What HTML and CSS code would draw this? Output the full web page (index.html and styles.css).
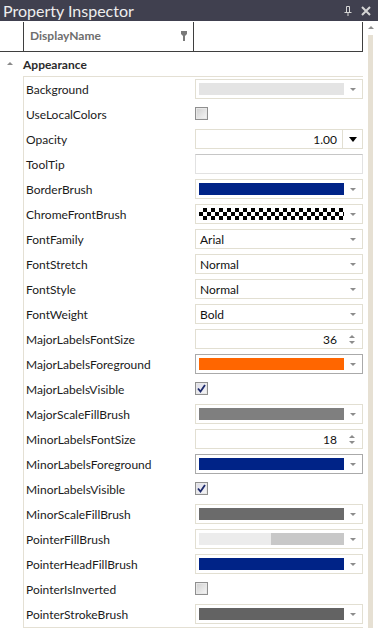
FILE: index.html
```html
<!DOCTYPE html>
<html lang="en">
<head>
    <meta charset="UTF-8">
    <title>Property Inspector</title>
    <link rel="stylesheet" href="styles.css">
</head>
<body>
    <div class="panel">
        <div class="titlebar">
            <span class="title">Property Inspector</span>
            <svg class="pin" width="8" height="10" viewBox="0 0 8 10">
                <path d="M2.5 0.5 V6 M5.5 0.5 V6 M2.5 0.5 H5.5 M0.5 6.5 H7.5 M4 6.5 V10" stroke="#d4d4d4" stroke-width="1" fill="none"/>
            </svg>
            <svg class="close" width="10" height="10" viewBox="0 0 10 10">
                <path d="M1 1 L9 9 M9 1 L1 9" stroke="#d4d4d4" stroke-width="2"/>
            </svg>
        </div>
        <div class="main">
            <div class="grid">
                <div class="header">
                    <div class="hcell first"></div>
                    <div class="hcell name-head">
                        <span>DisplayName</span>
                        <svg width="6" height="10" viewBox="0 0 6 10">
                            <path d="M0 0 H6 V3 L4 5 V10 H2 V5 L0 3 Z" fill="#7a7a7a"/>
                        </svg>
                    </div>
                    <div class="hcell last"></div>
                </div>
                <div class="group">
                    <span class="collapse"></span>
                    <span>Appearance</span>
                </div>
                <div class="rows">
                    <div class="row">
                        <div class="name">Background</div>
                        <div class="value"><div class="combo"><span class="swatch" style="background:#e4e4e4"></span><span class="arrow"></span></div></div>
                    </div>
                    <div class="row">
                        <div class="name">UseLocalColors</div>
                        <div class="value"><span class="check"></span></div>
                    </div>
                    <div class="row">
                        <div class="name">Opacity</div>
                        <div class="value"><div class="numdrop"><span class="num">1.00</span><span class="drop"></span></div></div>
                    </div>
                    <div class="row">
                        <div class="name">ToolTip</div>
                        <div class="value"><div class="textbox"></div></div>
                    </div>
                    <div class="row">
                        <div class="name">BorderBrush</div>
                        <div class="value"><div class="combo"><span class="swatch" style="background:#002387"></span><span class="arrow"></span></div></div>
                    </div>
                    <div class="row">
                        <div class="name">ChromeFrontBrush</div>
                        <div class="value"><div class="combo"><span class="swatch checker"></span><span class="arrow"></span></div></div>
                    </div>
                    <div class="row">
                        <div class="name">FontFamily</div>
                        <div class="value"><div class="combo"><span class="text">Arial</span><span class="arrow"></span></div></div>
                    </div>
                    <div class="row">
                        <div class="name">FontStretch</div>
                        <div class="value"><div class="combo"><span class="text">Normal</span><span class="arrow"></span></div></div>
                    </div>
                    <div class="row">
                        <div class="name">FontStyle</div>
                        <div class="value"><div class="combo"><span class="text">Normal</span><span class="arrow"></span></div></div>
                    </div>
                    <div class="row">
                        <div class="name">FontWeight</div>
                        <div class="value"><div class="combo"><span class="text">Bold</span><span class="arrow"></span></div></div>
                    </div>
                    <div class="row">
                        <div class="name">MajorLabelsFontSize</div>
                        <div class="value"><div class="spin"><span class="num">36</span><span class="updown"><i class="up"></i><i class="down"></i></span></div></div>
                    </div>
                    <div class="row">
                        <div class="name">MajorLabelsForeground</div>
                        <div class="value"><div class="combo active"><span class="swatch" style="background:#ff6600"></span><span class="arrow"></span></div></div>
                    </div>
                    <div class="row">
                        <div class="name">MajorLabelsVisible</div>
                        <div class="value"><span class="check checked"><svg width="9" height="9" viewBox="0 0 9 9"><path d="M1 4.5 L3.5 7.5 L8 1" stroke="#1d2a6b" stroke-width="1.8" fill="none"/></svg></span></div>
                    </div>
                    <div class="row">
                        <div class="name">MajorScaleFillBrush</div>
                        <div class="value"><div class="combo"><span class="swatch" style="background:#7f7f7f"></span><span class="arrow"></span></div></div>
                    </div>
                    <div class="row">
                        <div class="name">MinorLabelsFontSize</div>
                        <div class="value"><div class="spin"><span class="num">18</span><span class="updown"><i class="up"></i><i class="down"></i></span></div></div>
                    </div>
                    <div class="row">
                        <div class="name">MinorLabelsForeground</div>
                        <div class="value"><div class="combo active"><span class="swatch" style="background:#002387"></span><span class="arrow"></span></div></div>
                    </div>
                    <div class="row">
                        <div class="name">MinorLabelsVisible</div>
                        <div class="value"><span class="check checked"><svg width="9" height="9" viewBox="0 0 9 9"><path d="M1 4.5 L3.5 7.5 L8 1" stroke="#1d2a6b" stroke-width="1.8" fill="none"/></svg></span></div>
                    </div>
                    <div class="row">
                        <div class="name">MinorScaleFillBrush</div>
                        <div class="value"><div class="combo"><span class="swatch" style="background:#6b6b6b"></span><span class="arrow"></span></div></div>
                    </div>
                    <div class="row">
                        <div class="name">PointerFillBrush</div>
                        <div class="value"><div class="combo"><span class="swatch split"></span><span class="arrow"></span></div></div>
                    </div>
                    <div class="row">
                        <div class="name">PointerHeadFillBrush</div>
                        <div class="value"><div class="combo"><span class="swatch" style="background:#002387"></span><span class="arrow"></span></div></div>
                    </div>
                    <div class="row">
                        <div class="name">PointerIsInverted</div>
                        <div class="value"><span class="check"></span></div>
                    </div>
                    <div class="row">
                        <div class="name">PointerStrokeBrush</div>
                        <div class="value"><div class="combo"><span class="swatch" style="background:#636363"></span><span class="arrow"></span></div></div>
                    </div>
                </div>
            </div>
            <div class="scroll">
                <span class="scroll-up"></span>
                <span class="thumb"></span>
            </div>
        </div>
    </div>
</body>
</html>
```

FILE: styles.css
```css
* {
    box-sizing: border-box;
}
body {
    margin: 0;
    font-family: Lato, "Liberation Sans", sans-serif;
    font-size: 12px;
    color: #1b1b1b;
    background: #fff;
}
.panel {
    width: 378px;
    height: 628px;
    overflow: hidden;
    display: flex;
    flex-direction: column;
}
.titlebar {
    height: 21px;
    flex: none;
    background: #40404f;
    color: #eeeeee;
    display: flex;
    align-items: center;
    padding: 0 7px 0 3px;
    font-size: 16px;
}
.title {
    flex: 1;
}
.pin {
    margin-right: 9px;
    margin-top: 1px;
}
.main {
    flex: 1;
    display: flex;
    min-height: 0;
}
.grid {
    width: 363px;
    flex: none;
}
.header {
    display: flex;
    height: 31px;
    padding-top: 1px;
    border-bottom: 1px solid #3f3f3f;
}
.hcell {
    border-right: 1px solid #3f3f3f;
}
.hcell.first {
    width: 24px;
}
.hcell.name-head {
    width: 170px;
    display: flex;
    align-items: center;
    justify-content: space-between;
    padding: 0 6px 2px 6px;
    font-weight: bold;
    color: #6e6e6e;
}
.hcell.last {
    width: 169px;
}
.group {
    height: 24px;
    display: flex;
    align-items: center;
    font-weight: bold;
    color: #2b2b2b;
}
.collapse {
    width: 0;
    height: 0;
    margin: 0 10px 1px 7px;
    border-left: 3px solid transparent;
    border-right: 3px solid transparent;
    border-bottom: 3px solid #8a8a8a;
}
.rows {
    margin-left: 23px;
    border-left: 1px solid #e4e0d4;
    border-top: 1px solid #e4e0d4;
    border-bottom: 1px solid #e4e0d4;
}
.row {
    display: flex;
    height: 25px;
}
.name {
    width: 169px;
    padding: 5px 0 0 2px;
}
.value {
    width: 170px;
    padding: 2px 0 0 2px;
}
.combo,
.numdrop,
.spin,
.textbox {
    height: 20px;
    border: 1px solid #e2dfd2;
    background: #fff;
    display: flex;
    align-items: center;
}
.combo.active {
    border-color: #aaaaaa;
}
.textbox {
    border-color: #c6c6c6 #e2e2e2 #e2e2e2 #e2e2e2;
}
.swatch {
    width: 145px;
    height: 12px;
    margin-left: 3px;
}
.swatch.checker {
    background: conic-gradient(#000 25%, #fff 0 50%, #000 0 75%, #fff 0) 0 0 / 8px 8px;
}
.swatch.split {
    background: linear-gradient(to right, #ececec 50%, #c8c8c8 50%);
}
.text {
    flex: 1;
    padding-left: 4px;
    color: #111;
}
.arrow {
    width: 0;
    height: 0;
    margin-left: auto;
    margin-right: 6px;
    border-left: 3px solid transparent;
    border-right: 3px solid transparent;
    border-top: 3px solid #8c8c8c;
}
.num {
    flex: 1;
    text-align: right;
    padding-right: 5px;
    color: #111;
}
.drop {
    width: 20px;
    height: 18px;
    border-left: 1px solid #e2dfd2;
    display: flex;
    align-items: center;
    justify-content: center;
}
.drop::after {
    content: "";
    border-left: 4px solid transparent;
    border-right: 4px solid transparent;
    border-top: 5px solid #000;
}
.updown {
    width: 20px;
    display: flex;
    flex-direction: column;
    align-items: center;
    gap: 3px;
}
.updown i {
    width: 0;
    height: 0;
    border-left: 3px solid transparent;
    border-right: 3px solid transparent;
}
.updown .up {
    border-bottom: 3px solid #8c8c8c;
}
.updown .down {
    border-top: 3px solid #8c8c8c;
}
.check {
    display: flex;
    align-items: center;
    justify-content: center;
    width: 13px;
    height: 13px;
    margin-top: 3px;
    border: 1px solid #8f8f8f;
    background: linear-gradient(135deg, #cfcfcf, #f7f7f7);
    box-shadow: inset 0 0 0 1px #e8e8e8;
}
.check.checked {
    background: linear-gradient(135deg, #dcdce8, #f7f7f7);
}
.scroll {
    width: 15px;
    display: flex;
    flex-direction: column;
    align-items: center;
}
.scroll-up {
    margin-top: 5px;
    border-left: 3px solid transparent;
    border-right: 3px solid transparent;
    border-bottom: 3px solid #8e8e8e;
}
.thumb {
    flex: 1;
    width: 5px;
    margin-top: 6px;
    background: #e6e0d3;
}
```
